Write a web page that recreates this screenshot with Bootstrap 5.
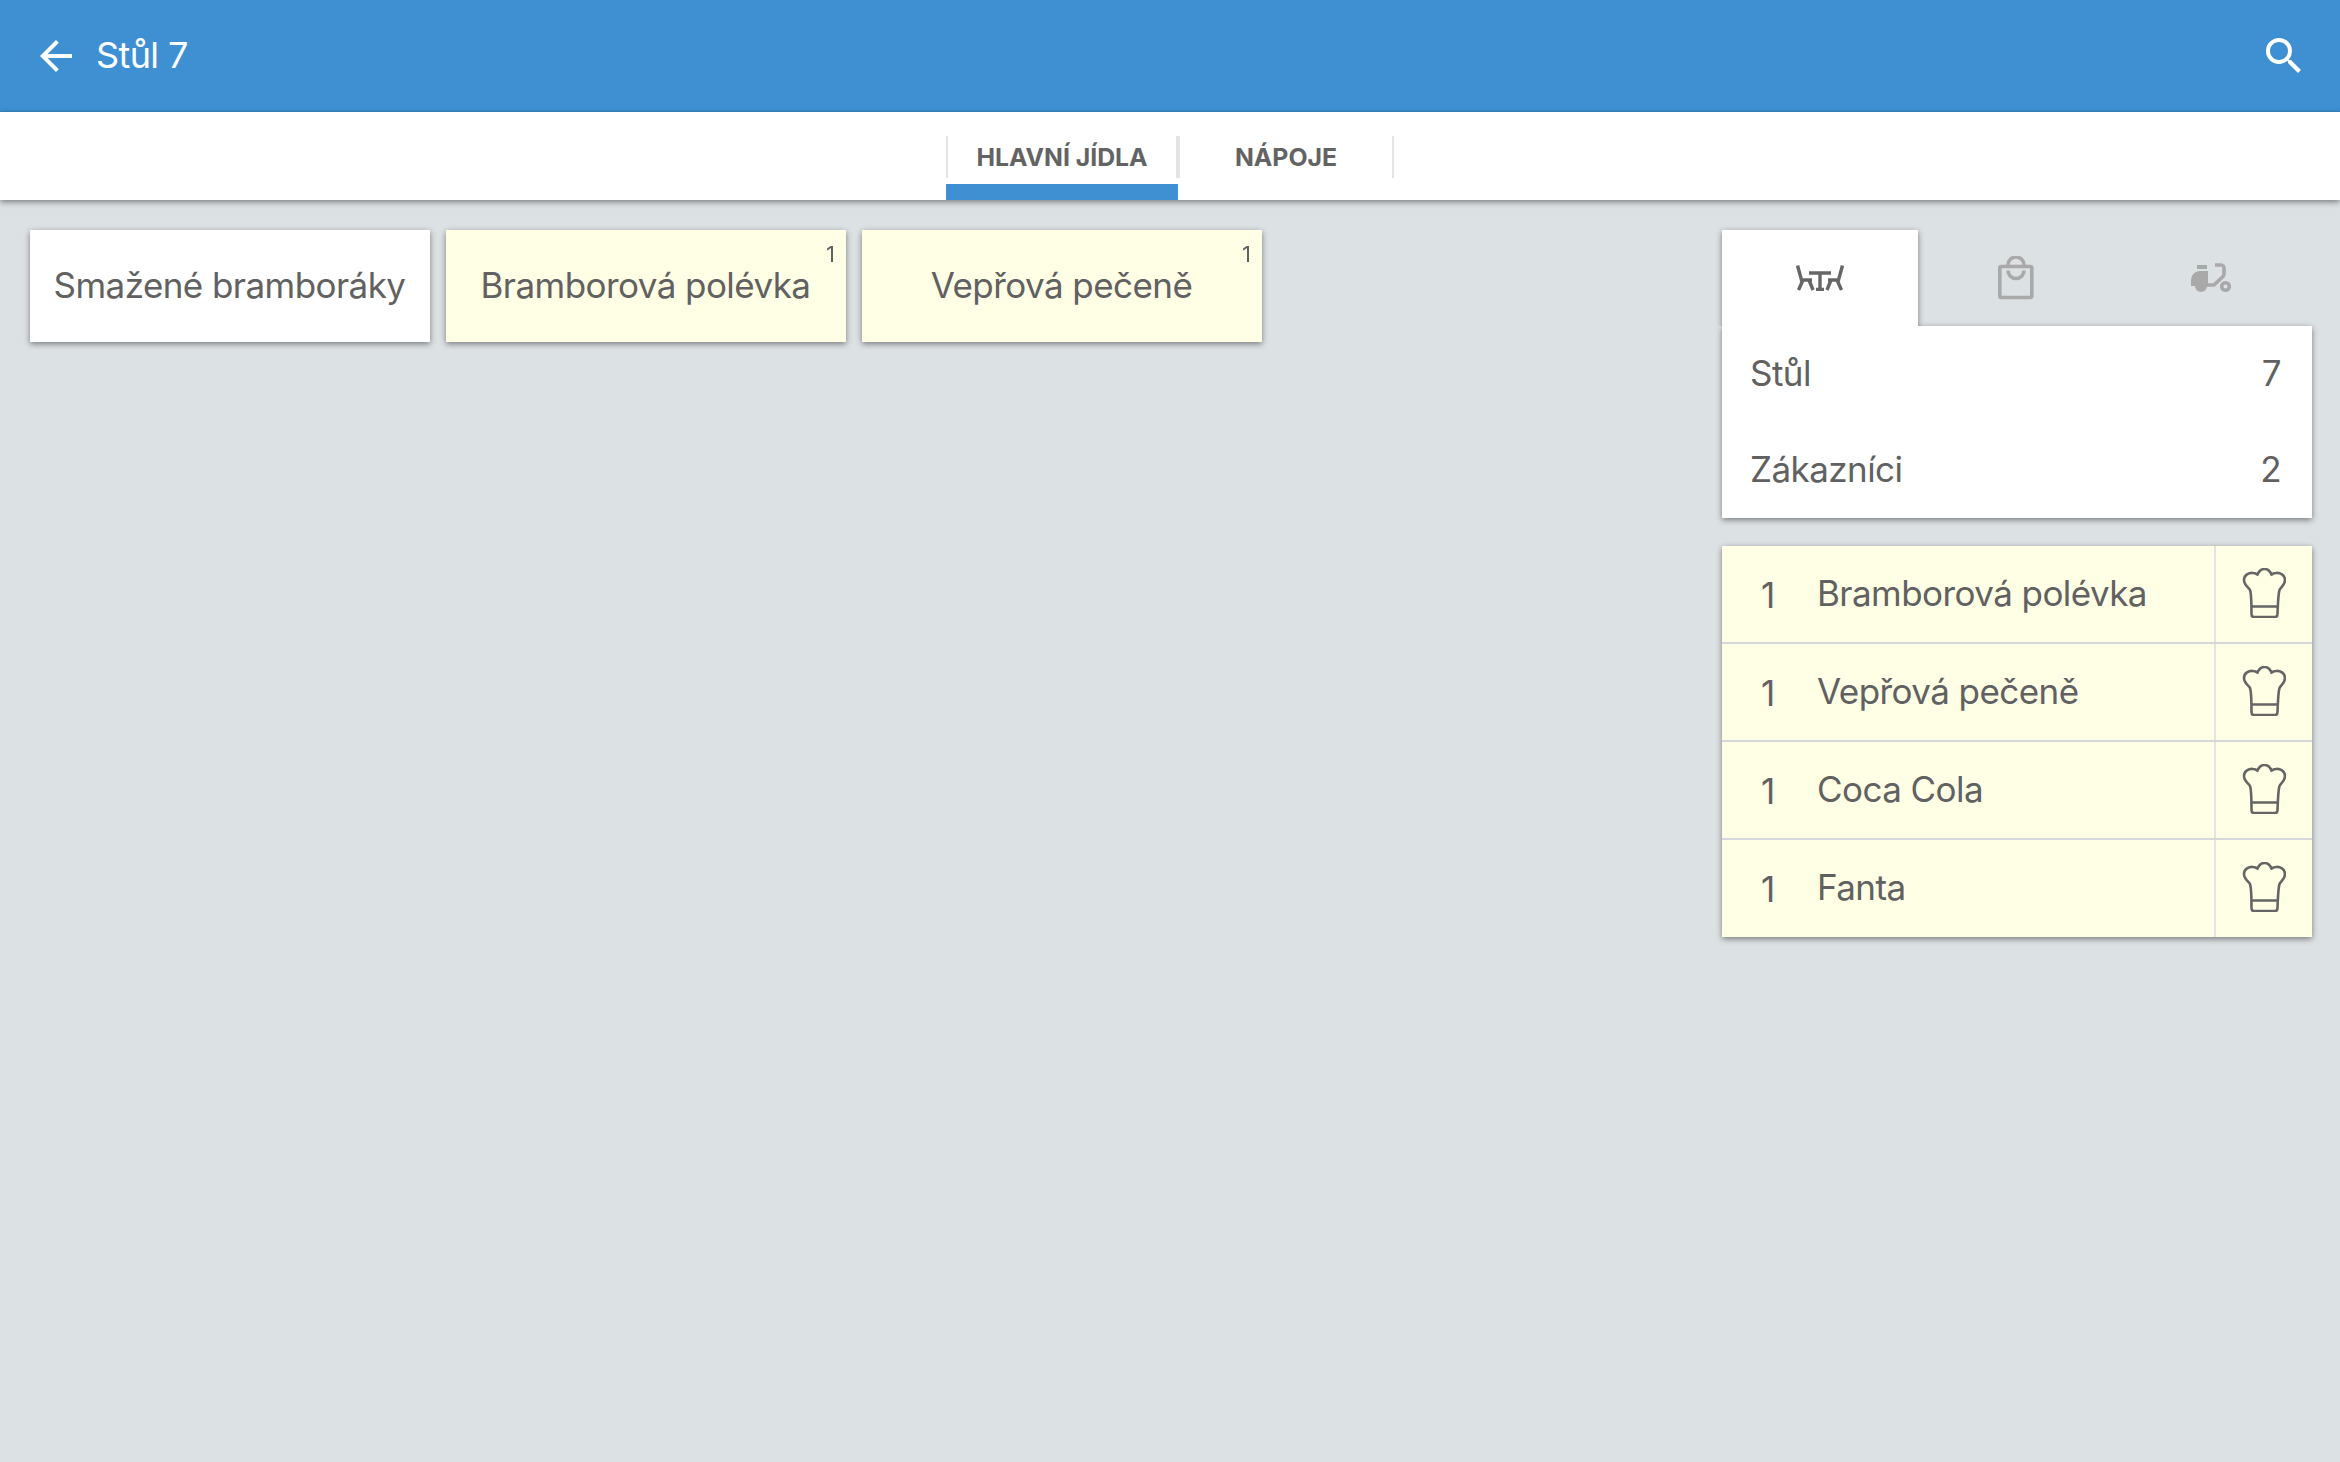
<!doctype html>
<html lang="cs"><head><meta charset="utf-8"><title>Stůl 7</title>
<link href="https://cdn.jsdelivr.net/npm/bootstrap@5.3.0/dist/css/bootstrap.min.css" rel="stylesheet">
<style>
html,body{height:100%}
body{background:#dce1e4;color:#616161;font-family:Inter,"Noto Sans",sans-serif;font-size:35px;letter-spacing:-.56px;overflow:hidden}
.topbar{background:#3e90d3;height:112px;padding:0 32px 0 40px;color:#fff;border-bottom:1px solid #3a88c8}
.topbar h1{font-size:36px;font-weight:400;margin:0 0 2px 24px;line-height:1;letter-spacing:-.6px}
.topbar svg{width:48px;height:48px;fill:#fff;display:block}
.topbar .back{width:32px}
.subnav{background:#fff;height:88px;box-shadow:0 2px 6px rgba(0,0,0,.45);position:relative}
.subtab{height:88px;font-size:24.8px;font-weight:700;letter-spacing:0;color:#636363;position:relative;display:flex;align-items:flex-start;justify-content:center;padding-top:30px;line-height:30px}
.subtab.one{width:232px}.subtab.two{width:216px}
.subtab::before,.subtab::after{content:"";position:absolute;top:24px;height:42px;width:2px;background:#e4e4e4}
.subtab::before{left:0}.subtab::after{right:0}
.subtab.one::after{width:4px;right:-2px}
.subtab.two::before{display:none}
.subtab.one i{position:absolute;left:0;bottom:0;width:232px;height:16px;background:#3e90d3}
.stage{padding:30px 28px 0 30px}
.dish{width:400px;height:112px;background:#fff;box-shadow:0 2px 6px rgba(0,0,0,.45);position:relative;line-height:1;padding:0 1px 2px 0}
.cream{background:#ffffe6}
.dish .tally{position:absolute;top:13px;right:11px;font-size:22px;line-height:1;letter-spacing:0;will-change:transform}
.side{width:590px}
.modes{height:96px;position:relative;z-index:2}
.mode{flex:1 1 0;height:96px;display:flex;align-items:center;justify-content:center}
.mode.on{flex:0 0 196px;background:#fff;box-shadow:0 2px 6px rgba(0,0,0,.45);clip-path:inset(-8px -8px 0 -8px)}
.mode.scoot{padding-right:3px}
.info{background:#fff;box-shadow:0 2px 6px rgba(0,0,0,.45);position:relative}
.inforow{height:96px;padding:0 31px 2px 28px}
.orders{margin-top:28px;box-shadow:0 2px 6px rgba(0,0,0,.45)}
.orderrow{height:98px;border-bottom:2px solid #d6d8dc}
.orderrow:last-child{border-bottom:0;height:97px}
.qty{width:95px;padding-left:39px;padding-top:2px}
.dname{flex:1;line-height:1;padding-bottom:2px}
.hat{width:98px;height:100%;border-left:2px solid #e2e3e6;display:flex;align-items:center;justify-content:center}
.hat svg{margin-bottom:3px}
</style></head>
<body>
<svg width="0" height="0" class="position-absolute" aria-hidden="true"><symbol id="chef" viewBox="0 0 44 50"><path fill="none" stroke="#666" stroke-width="2.600" d="M8 22C6 19 2 17 2 12 2 7 7 4.500 11 5 13 5 14.500 6 15.500 6.500 17 3 19 1 22.500 1 26 1 28 3 29.500 6.500 30.500 6 32 5 34 5 38 4.500 43 7 43 12 43 17 39 19 37.500 22 36.500 25 36 32 35.500 46 35.500 48 34.500 49 33 49H12C10.500 49 9.500 48 9.500 46 9.500 32 9 25 8 22ZM10 38.500H35"/></symbol></svg>
<header class="navbar topbar flex-nowrap">
 <div class="d-flex align-items-center">
  <svg class="back" viewBox="4 0 16 24" aria-hidden="true"><path d="M20 11H7.830l5.590-5.590L12 4l-8 8 8 8 1.410-1.410L7.830 13H20v-2z"/></svg>
  <h1>Stůl 7</h1>
 </div>
 <svg viewBox="0 0 24 24" aria-hidden="true"><path d="M15.500 14h-.79l-.28-.27A6.470 6.470 0 0 0 16 9.500 6.500 6.500 0 1 0 9.500 16c1.610 0 3.090-.59 4.230-1.570l.27.28v.79l5 4.990L20.490 19l-4.990-5zm-6 0C7.010 14 5 11.990 5 9.500S7.010 5 9.500 5 14 7.010 14 9.500 11.990 14 9.500 14z"/></svg>
</header>
<nav class="subnav d-flex justify-content-center">
 <div class="d-flex">
  <div class="subtab one">HLAVNÍ JÍDLA<i></i></div>
  <div class="subtab two">NÁPOJE</div>
 </div>
</nav>
<main class="stage d-flex justify-content-between align-items-start">
 <div class="d-flex gap-3">
  <div class="dish d-flex align-items-center justify-content-center">Smažené bramboráky</div>
  <div class="dish cream d-flex align-items-center justify-content-center">Bramborová polévka<span class="tally">1</span></div>
  <div class="dish cream d-flex align-items-center justify-content-center">Vepřová pečeně<span class="tally">1</span></div>
 </div>
 <aside class="side">
  <div class="modes d-flex">
   <div class="mode on">
    <svg width="48" height="26" viewBox="0 0 48 26" fill="none" stroke="#666" stroke-width="3.400" aria-hidden="true"><path d="M1.500 .5 5.500 15H16M7 15 2.500 25M13 15 17 25"/><path d="M46.500 .5 42.500 15H32M41 15 45.500 25M35 15 31 25"/><path d="M13 8H35M24 8V24.500M20 24.500H28"/></svg>
   </div>
   <div class="mode">
    <svg width="36" height="44" viewBox="0 0 36 44" fill="none" stroke="#a9a9a9" stroke-width="3.600" aria-hidden="true"><rect x="1.800" y="10.500" width="32" height="31" rx="1.500"/><path d="M10 9A8 8 0 0 1 26 9M10 14.500A8 8 0 0 0 26 14.500"/></svg>
   </div>
   <div class="mode scoot">
    <svg width="40" height="30" viewBox="0 0 40 30" aria-hidden="true"><g fill="#a9a9a9"><rect x="6" y="2" width="10" height="4"/><path d="M0 18C0 12 4 8 9 8H17V23H0z"/><path d="M4 23h12a6 6 0 0 1-12 0z"/></g><path d="M24 2H30C32 2 33 3.500 33 5V11C33 12 32.500 13 32 13.500L23 22H15" fill="none" stroke="#a9a9a9" stroke-width="3.600"/><circle cx="34.500" cy="23.500" r="3.800" fill="none" stroke="#a9a9a9" stroke-width="3.600"/></svg>
   </div>
  </div>
  <div class="info">
   <div class="inforow d-flex justify-content-between align-items-center"><span>Stůl</span><span>7</span></div>
   <div class="inforow d-flex justify-content-between align-items-center"><span>Zákazníci</span><span>2</span></div>
  </div>
  <div class="orders cream">
   <div class="orderrow d-flex align-items-center"><div class="qty">1</div><div class="dname">Bramborová polévka</div><div class="hat"><svg width="44" height="50" aria-hidden="true"><use href="#chef"/></svg></div></div>
   <div class="orderrow d-flex align-items-center"><div class="qty">1</div><div class="dname">Vepřová pečeně</div><div class="hat"><svg width="44" height="50" aria-hidden="true"><use href="#chef"/></svg></div></div>
   <div class="orderrow d-flex align-items-center"><div class="qty">1</div><div class="dname">Coca Cola</div><div class="hat"><svg width="44" height="50" aria-hidden="true"><use href="#chef"/></svg></div></div>
   <div class="orderrow d-flex align-items-center"><div class="qty">1</div><div class="dname">Fanta</div><div class="hat"><svg width="44" height="50" aria-hidden="true"><use href="#chef"/></svg></div></div>
  </div>
 </aside>
</main>
<script src="https://cdn.jsdelivr.net/npm/bootstrap@5.3.0/dist/js/bootstrap.bundle.min.js"></script>
</body></html>
